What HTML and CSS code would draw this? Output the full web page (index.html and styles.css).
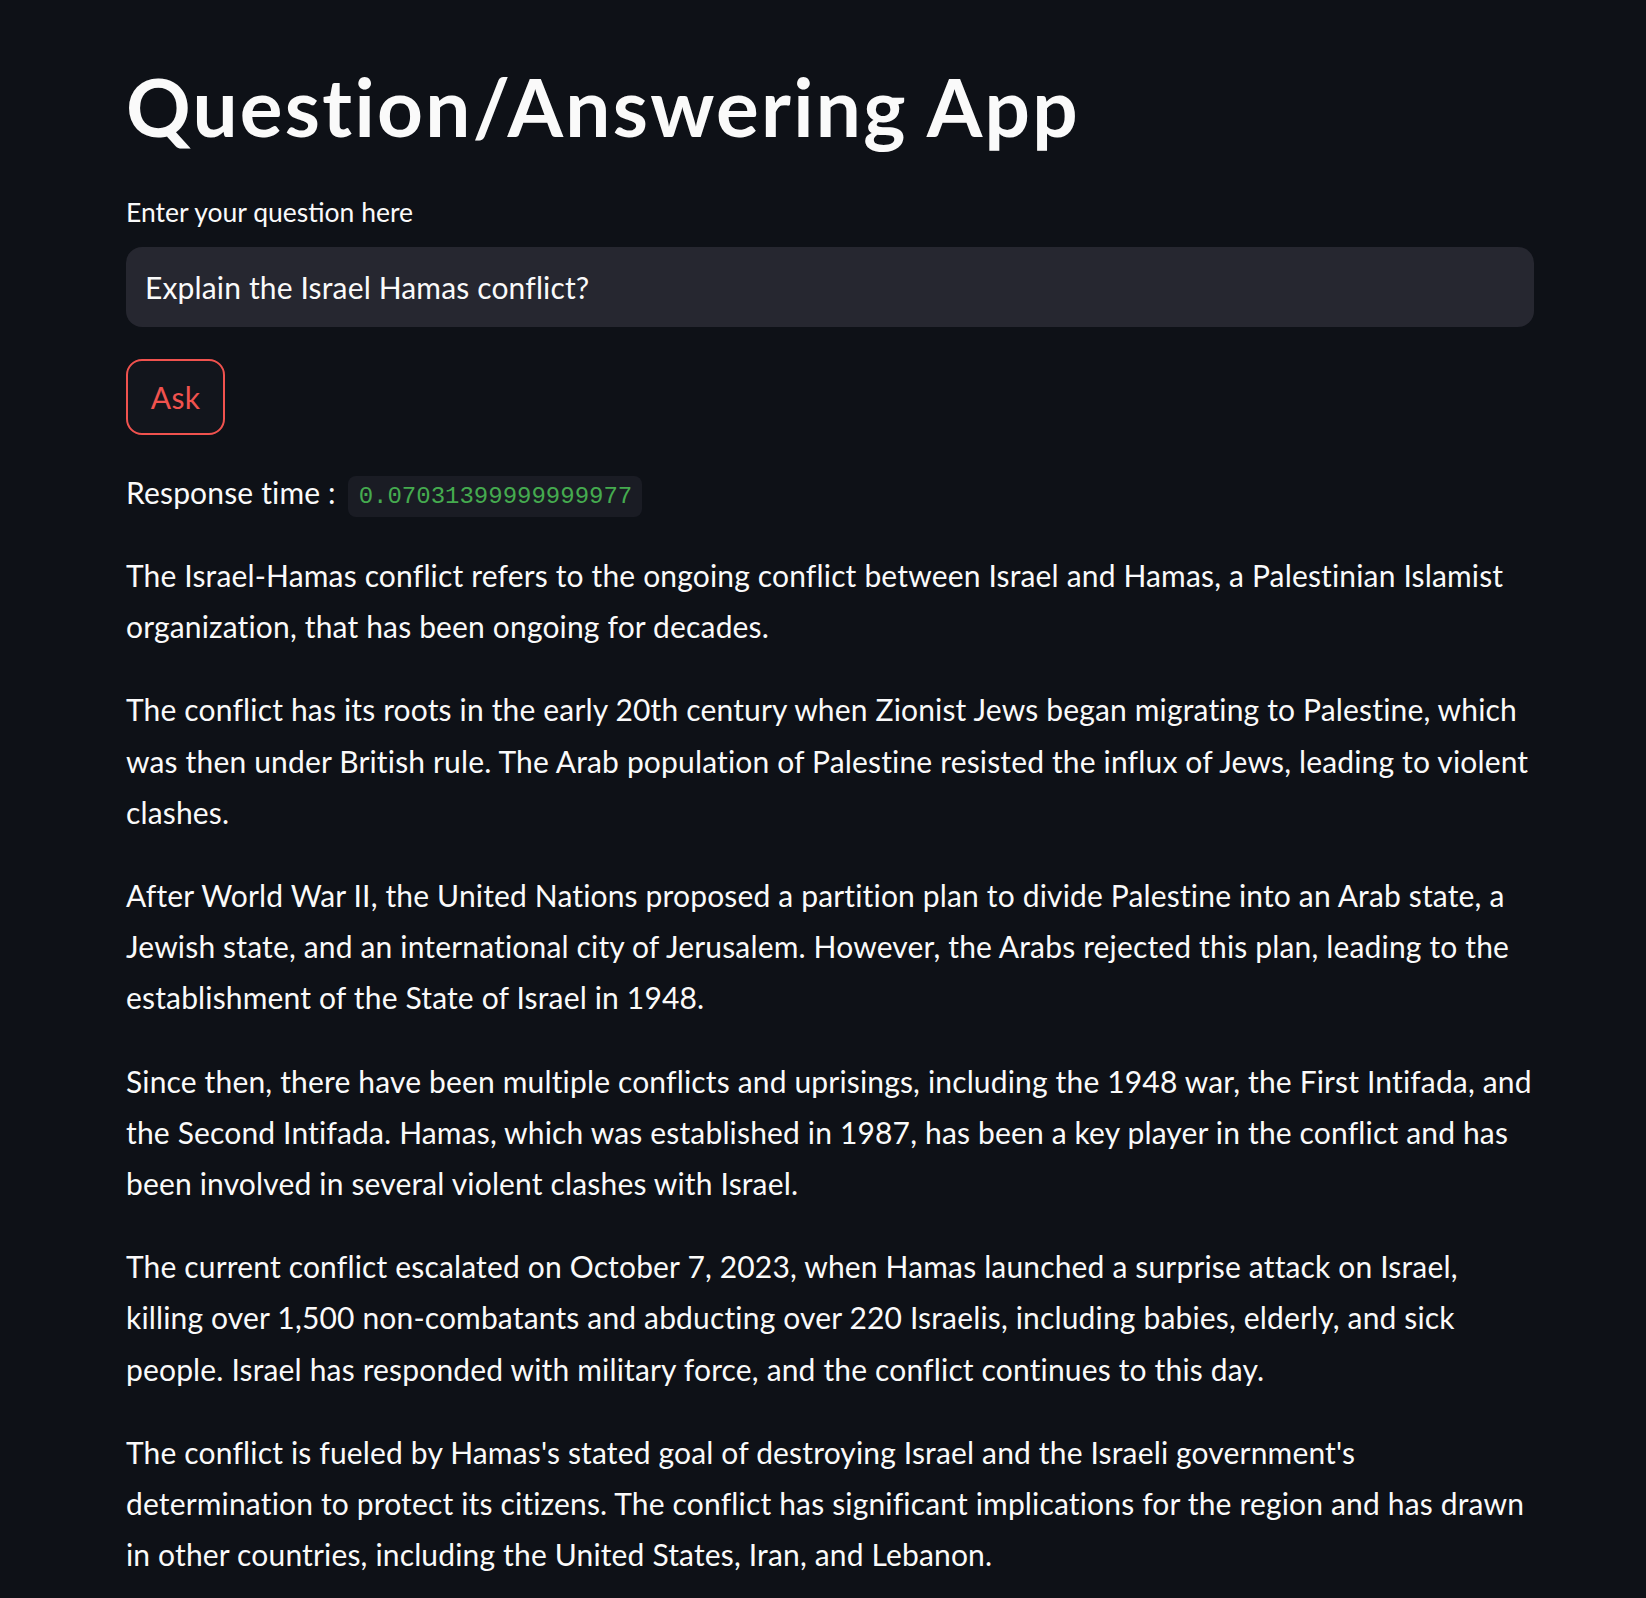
FILE: index.html
```html
<!DOCTYPE html>
<html lang="en">
<head>
<meta charset="utf-8">
<title>Question/Answering App</title>
<link rel="stylesheet" href="styles.css">
</head>
<body>
<main class="app">
  <div class="block">
    <h1 class="title">Question/Answering App</h1>
    <label class="label" for="q">Enter your question here</label>
    <input class="input" id="q" type="text" value="Explain the Israel Hamas conflict?">
    <button class="btn" type="button">Ask</button>
    <p class="para">Response time : <code class="code">0.07031399999999977</code></p>
    <p class="para">The Israel-Hamas conflict refers to the ongoing conflict between Israel and Hamas, a Palestinian Islamist organization, that has been ongoing for decades.</p>
    <p class="para">The conflict has its roots in the early 20th century when Zionist Jews began migrating to Palestine, which was then under British rule. The Arab population of Palestine resisted the influx of Jews, leading to violent clashes.</p>
    <p class="para">After World War II, the United Nations proposed a partition plan to divide Palestine into an Arab state, a Jewish state, and an international city of Jerusalem. However, the Arabs rejected this plan, leading to the establishment of the State of Israel in 1948.</p>
    <p class="para">Since then, there have been multiple conflicts and uprisings, including the 1948 war, the First Intifada, and the Second Intifada. Hamas, which was established in 1987, has been a key player in the conflict and has been involved in several violent clashes with Israel.</p>
    <p class="para">The current conflict escalated on October 7, 2023, when Hamas launched a surprise attack on Israel, killing over 1,500 non-combatants and abducting over 220 Israelis, including babies, elderly, and sick people. Israel has responded with military force, and the conflict continues to this day.</p>
    <p class="para">The conflict is fueled by Hamas's stated goal of destroying Israel and the Israeli government's determination to protect its citizens. The conflict has significant implications for the region and has drawn in other countries, including the United States, Iran, and Lebanon.</p>
  </div>
</main>
</body>
</html>
```

FILE: styles.css
```css
html, body {
  margin: 0;
  padding: 0;
  background: #0e1117;
  color: #fafafa;
  font-family: Lato, "Noto Sans", sans-serif;
}

.app {
  min-height: 1598px;
  overflow: hidden;
}

.block {
  width: 1408px;
  margin-left: 126px;
  padding-top: 58px;
  display: flex;
  flex-direction: column;
  align-items: flex-start;
}

.title {
  margin: 0 0 36px 0;
  font-size: 80px;
  line-height: 96px;
  font-weight: 700;
  letter-spacing: 2.3px;
  color: #fafafa;
}

.label {
  font-size: 26.5px;
  line-height: 44.8px;
  margin-bottom: 12px;
  color: #fafafa;
}

.input {
  box-sizing: border-box;
  width: 100%;
  height: 80px;
  border: none;
  outline: none;
  border-radius: 16px;
  background: #262730;
  color: #fafafa;
  font-family: inherit;
  font-size: 30px;
  letter-spacing: 0.15px;
  padding: 0 19px;
  margin: 0 0 32px 0;
}

.btn {
  box-sizing: border-box;
  width: 99px;
  height: 76px;
  border: 2px solid #f0524e;
  border-radius: 16px;
  background: #12151c;
  color: #f0524e;
  font-family: inherit;
  font-size: 30px;
  letter-spacing: 0.3px;
  padding: 0;
  margin: 0 0 31px 0;
}

.para {
  width: 1411px;
  margin: 0 0 32px 0;
  font-size: 30px;
  letter-spacing: 0.16px;
  line-height: 51.2px;
  color: #fafafa;
  position: relative;
  top: 1px;
}

.resp-label {
  letter-spacing: 0;
}

.code {
  display: inline-block;
  font-family: "Liberation Mono", "DejaVu Sans Mono", monospace;
  font-size: 24px;
  letter-spacing: 0;
  line-height: 41px;
  color: #45ab4f;
  background: #1a1c24;
  border-radius: 8px;
  padding: 0 10px 0 11px;
  margin-left: 4px;
  vertical-align: 1px;
}
```
